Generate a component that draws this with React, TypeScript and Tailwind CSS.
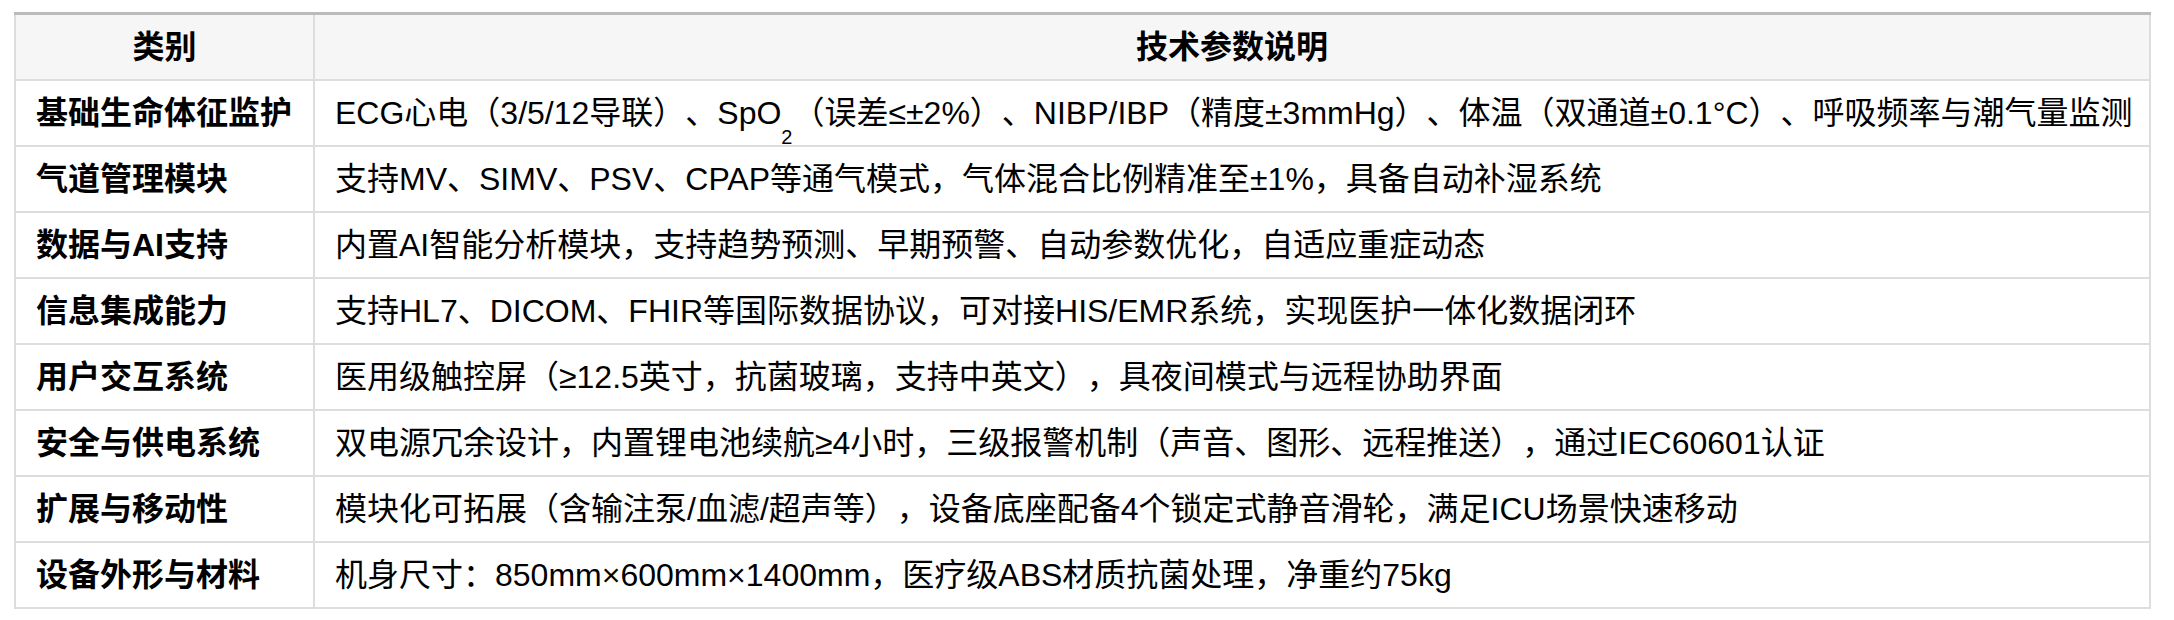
import React from 'react';

type Row = {
  category: string;
  detail: React.ReactNode;
};

const rows: Row[] = [
  {
    category: '基础生命体征监护',
    detail: (
      <>
        ECG心电（3/5/12导联）、SpO
        <sub className="text-[20px] bottom-[-20px]">2</sub>
        （误差≤±2%）、NIBP/IBP（精度±3mmHg）、体温（双通道±0.1°C）、呼吸频率与潮气量监测
      </>
    ),
  },
  {
    category: '气道管理模块',
    detail: '支持MV、SIMV、PSV、CPAP等通气模式，气体混合比例精准至±1%，具备自动补湿系统',
  },
  {
    category: '数据与AI支持',
    detail: '内置AI智能分析模块，支持趋势预测、早期预警、自动参数优化，自适应重症动态',
  },
  {
    category: '信息集成能力',
    detail: '支持HL7、DICOM、FHIR等国际数据协议，可对接HIS/EMR系统，实现医护一体化数据闭环',
  },
  {
    category: '用户交互系统',
    detail: '医用级触控屏（≥12.5英寸，抗菌玻璃，支持中英文），具夜间模式与远程协助界面',
  },
  {
    category: '安全与供电系统',
    detail: '双电源冗余设计，内置锂电池续航≥4小时，三级报警机制（声音、图形、远程推送），通过IEC60601认证',
  },
  {
    category: '扩展与移动性',
    detail: '模块化可拓展（含输注泵/血滤/超声等），设备底座配备4个锁定式静音滑轮，满足ICU场景快速移动',
  },
  {
    category: '设备外形与材料',
    detail: '机身尺寸：850mm×600mm×1400mm，医疗级ABS材质抗菌处理，净重约75kg',
  },
];

export default function App() {
  return (
    <div className="min-h-[620px] bg-white pt-[12px] pl-[14px] font-['Liberation_Sans','Noto_Sans_CJK_SC',sans-serif] text-[32px] leading-[48px] text-black [text-spacing-trim:space-all]">
      <table className="w-[2137px] table-fixed border-collapse">
        <colgroup>
          <col className="w-[299px]" />
          <col />
        </colgroup>
        <thead>
          <tr className="bg-[#f6f6f6]">
            <th className="border-2 border-t-[3px] border-[#dddddd] border-t-[#bbbbbb] px-5 py-2 text-center font-bold">
              类别
            </th>
            <th className="border-2 border-t-[3px] border-[#dddddd] border-t-[#bbbbbb] px-5 py-2 text-center font-bold">
              技术参数说明
            </th>
          </tr>
        </thead>
        <tbody>
          {rows.map((row) => (
            <tr key={row.category}>
              <td className="whitespace-nowrap border-2 border-[#dddddd] px-5 py-2 font-bold">
                {row.category}
              </td>
              <td className="whitespace-nowrap border-2 border-[#dddddd] px-5 py-2">
                {row.detail}
              </td>
            </tr>
          ))}
        </tbody>
      </table>
    </div>
  );
}
